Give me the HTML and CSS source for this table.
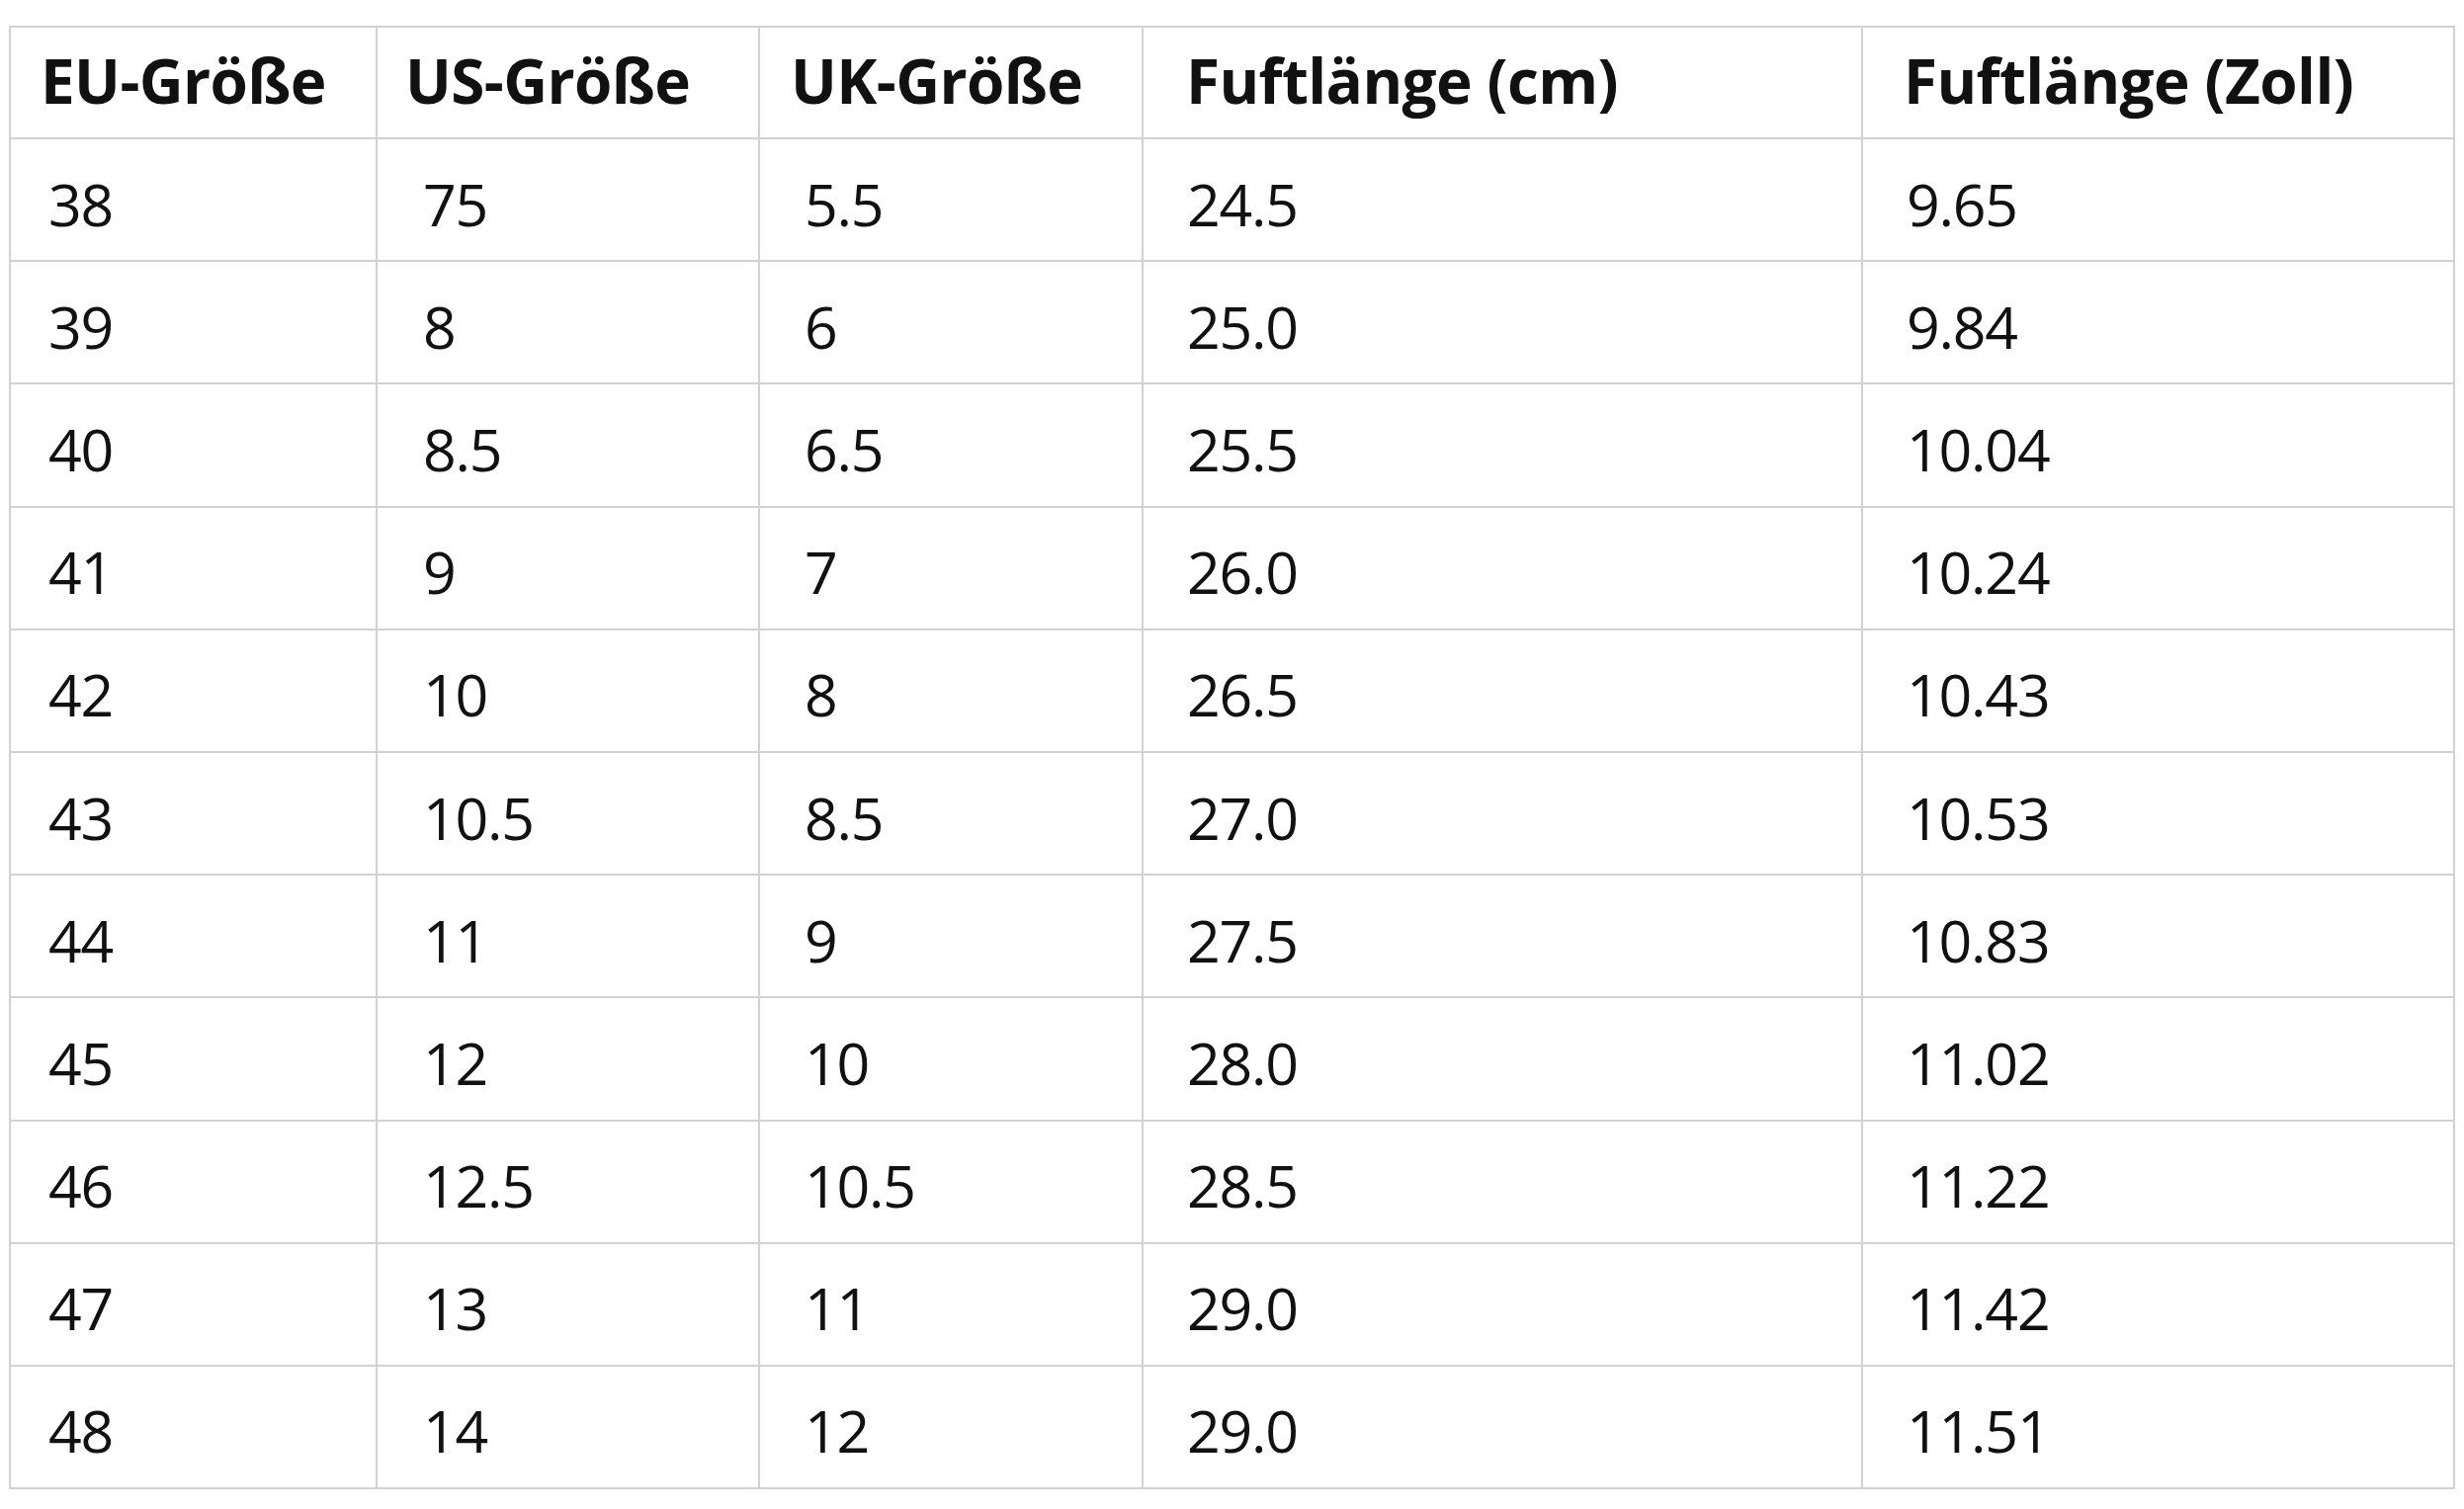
FILE: index.html
```html
<!DOCTYPE html>
<html lang="de">
<head>
<meta charset="utf-8">
<title>Größentabelle</title>
<link rel="stylesheet" href="styles.css">
</head>
<body>
<table class="size-table">
  <colgroup>
    <col class="c1"><col class="c2"><col class="c3"><col class="c4"><col class="c5">
  </colgroup>
  <thead>
    <tr><th>EU-Größe</th><th>US-Größe</th><th>UK-Größe</th><th>Fuftlänge (cm)</th><th>Fuftlänge (Zoll)</th></tr>
  </thead>
  <tbody>
    <tr><td>38</td><td>75</td><td>5.5</td><td>24.5</td><td>9.65</td></tr>
    <tr><td>39</td><td>8</td><td>6</td><td>25.0</td><td>9.84</td></tr>
    <tr><td>40</td><td>8.5</td><td>6.5</td><td>25.5</td><td>10.04</td></tr>
    <tr><td>41</td><td>9</td><td>7</td><td>26.0</td><td>10.24</td></tr>
    <tr><td>42</td><td>10</td><td>8</td><td>26.5</td><td>10.43</td></tr>
    <tr><td>43</td><td>10.5</td><td>8.5</td><td>27.0</td><td>10.53</td></tr>
    <tr><td>44</td><td>11</td><td>9</td><td>27.5</td><td>10.83</td></tr>
    <tr><td>45</td><td>12</td><td>10</td><td>28.0</td><td>11.02</td></tr>
    <tr><td>46</td><td>12.5</td><td>10.5</td><td>28.5</td><td>11.22</td></tr>
    <tr><td>47</td><td>13</td><td>11</td><td>29.0</td><td>11.42</td></tr>
    <tr><td>48</td><td>14</td><td>12</td><td>29.0</td><td>11.51</td></tr>
  </tbody>
</table>
</body>
</html>
```
FILE: styles.css
```css
html, body {
  margin: 0;
  padding: 0;
  background: #ffffff;
}
body {
  padding: 26px 0 0 9px;
  font-family: "Open Sans", "Noto Sans", sans-serif;
  color: #111111;
}
.size-table {
  border-collapse: collapse;
  table-layout: fixed;
  width: 2473px;
}
.size-table col.c1 { width: 371px; }
.size-table col.c2 { width: 387px; }
.size-table col.c3 { width: 388px; }
.size-table col.c4 { width: 728px; }
.size-table col.c5 { width: 599px; }

.size-table th,
.size-table td {
  border: 2px solid #d2d2d2;
  text-align: left;
  vertical-align: middle;
  white-space: nowrap;
  padding: 0;
}
.size-table th {
  height: 105px;
  font-weight: 700;
  font-size: 62px;
  letter-spacing: -0.6px;
  line-height: 1;
  padding-bottom: 6px;
}
.size-table td {
  height: 114.2px;
  font-weight: 400;
  font-size: 59px;
  letter-spacing: -1.2px;
  line-height: 1;
  padding-top: 8px;
}
.size-table th:nth-child(1) { padding-left: 30px; }
.size-table th:nth-child(2) { padding-left: 28px; }
.size-table th:nth-child(3) { padding-left: 31px; }
.size-table th:nth-child(4) { padding-left: 43px; }
.size-table th:nth-child(5) { padding-left: 41px; }
.size-table td:nth-child(1) { padding-left: 38px; }
.size-table td:nth-child(2) { padding-left: 46px; }
.size-table td:nth-child(3) { padding-left: 45px; }
.size-table td:nth-child(4) { padding-left: 44px; }
.size-table td:nth-child(5) { padding-left: 44px; }
```
